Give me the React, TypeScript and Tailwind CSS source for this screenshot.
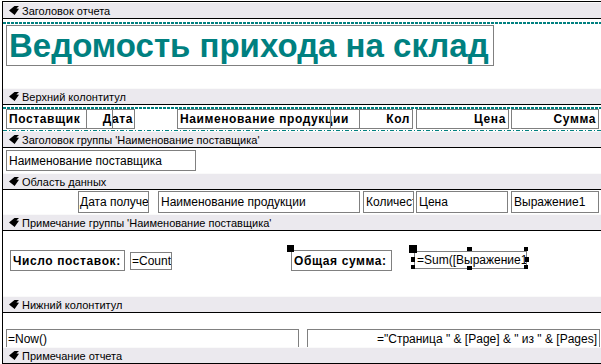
import React from "react";

const Icon = () => (
  <svg width="10" height="9" viewBox="0 0 10 9" className="shrink-0">
    <path d="M0 4.6 L5.5 0 L10 0 L7.4 2.4 L10 2.8 L5.6 9 Z" fill="#000" />
  </svg>
);

const Bar = ({ label }: { label: string }) => (
  <div className="h-[17px] shrink-0 bg-[#ebe9ee] border-t border-t-[#fafafa] border-b border-b-black flex items-center pl-[6px] gap-[3px]">
    <Icon />
    <span className="text-[11px] leading-none text-black whitespace-nowrap pt-[1px]">{label}</span>
  </div>
);

const box = "absolute border border-[#808080] bg-white overflow-hidden whitespace-nowrap flex items-center";
const bold = "font-bold text-[12px] tracking-[0.6px] text-black";
const norm = "text-[12px] text-black";

export default function App() {
  return (
    <div className="w-[601px] h-[364px] bg-white overflow-hidden pt-[1px] pl-[2px] font-['Liberation_Sans',Arial,sans-serif]">
      <div className="h-[363px] border-l border-t border-black flex flex-col">
        <Bar label="Заголовок отчета" />
        {/* Report header */}
        <div className="relative h-[69px] shrink-0 overflow-hidden">
          <div className="absolute left-0 right-0 top-[3px] h-[2px] bg-[repeating-linear-gradient(90deg,#008080_0_3px,transparent_3px_4px)]" />
          <div className={`${box} left-[3px] top-[6px] w-[488px] h-[41px] pl-[2px]`}>
            <span className="font-bold text-[33px] leading-none text-[#008080]">Ведомость прихода на склад</span>
          </div>
        </div>
        <Bar label="Верхний колонтитул" />
        {/* Page header */}
        <div className="relative h-[26px] shrink-0 overflow-hidden">
          <div className="absolute left-0 right-0 top-[2px] h-[2px] bg-[repeating-linear-gradient(90deg,#008080_0_3px,transparent_3px_4px)]" />
          <div className={`${box} left-[3px] top-[4px] w-[81px] h-[20px] pl-[2px] ${bold}`}>Поставщик</div>
          <div className={`${box} left-[83px] top-[4px] w-[49px] h-[20px] justify-end pr-[1px] ${bold}`}>Дата</div>
          <div className="absolute left-[109px] top-[4px] w-[1px] h-[20px] bg-[#808080]" />
          <div className={`${box} left-[174px] top-[4px] w-[183px] h-[20px] pl-[2px] ${bold}`}>Наименование продукции</div>
          <div className="absolute left-[327px] top-[4px] w-[1px] h-[20px] bg-[#808080]" />
          <div className={`${box} left-[356px] top-[4px] w-[54px] h-[20px] justify-end pr-[2px] ${bold}`}>Кол</div>
          <div className={`${box} left-[413px] top-[4px] w-[93px] h-[20px] justify-end pr-[2px] ${bold}`}>Цена</div>
          <div className={`${box} left-[508px] top-[4px] w-[88px] h-[20px] justify-end pr-[2px] ${bold}`}>Сумма</div>
          <div className="absolute left-0 right-0 top-[25px] h-[1px] bg-[repeating-linear-gradient(90deg,#008080_0_4px,transparent_4px_6px,#008080_6px_7px,transparent_7px_9px)]" />
        </div>
        <Bar label="Заголовок группы 'Наименование поставщика'" />
        {/* Group header */}
        <div className="relative h-[25px] shrink-0 overflow-hidden">
          <div className={`${box} left-[3px] top-[2px] w-[190px] h-[21px] pl-[2px] ${norm}`}>Наименование поставщика</div>
        </div>
        <Bar label="Область данных" />
        {/* Detail */}
        <div className="relative h-[24px] shrink-0 overflow-hidden">
          <div className={`${box} left-[75px] top-[1px] w-[71px] h-[22px] pl-[1px] ${norm}`}>Дата получения</div>
          <div className={`${box} left-[155px] top-[1px] w-[202px] h-[22px] pl-[2px] ${norm}`}>Наименование продукции</div>
          <div className={`${box} left-[360px] top-[1px] w-[51px] h-[22px] pl-[2px] ${norm}`}>Количество</div>
          <div className={`${box} left-[413px] top-[1px] w-[92px] h-[22px] pl-[2px] ${norm}`}>Цена</div>
          <div className={`${box} left-[508px] top-[1px] w-[88px] h-[22px] pl-[2px] ${norm}`}>Выражение1</div>
        </div>
        <Bar label="Примечание группы 'Наименование поставщика'" />
        {/* Group footer */}
        <div className="relative h-[65px] shrink-0 overflow-hidden">
          <div className={`${box} left-[7px] top-[19px] w-[115px] h-[21px] pl-[2px] ${bold}`}>Число поставок:</div>
          <div className={`${box} left-[127px] top-[21px] w-[42px] h-[18px] pl-[1px] ${norm}`}>=Count([Поставщик])</div>
          <div className={`${box} left-[288px] top-[19px] w-[101px] h-[21px] pl-[2px] ${bold}`}>Общая сумма:</div>
          <div className="absolute left-[284px] top-[14px] w-[7px] h-[7px] bg-black" />
          <div className={`${box} left-[411px] top-[20px] w-[113px] h-[18px] pl-[2px] ${norm}`}>=Sum([Выражение1])</div>
          <div className="absolute left-[406px] top-[14px] w-[8px] h-[8px] bg-black" />
          <div className="absolute left-[464px] top-[16px] w-[5px] h-[4px] bg-black" />
          <div className="absolute left-[521px] top-[16px] w-[4px] h-[4px] bg-black" />
          <div className="absolute left-[408px] top-[26px] w-[4px] h-[5px] bg-black" />
          <div className="absolute left-[522px] top-[26px] w-[4px] h-[5px] bg-black" />
          <div className="absolute left-[408px] top-[34px] w-[4px] h-[4px] bg-black" />
          <div className="absolute left-[464px] top-[35px] w-[5px] h-[4px] bg-black" />
          <div className="absolute left-[521px] top-[34px] w-[4px] h-[4px] bg-black" />
        </div>
        <Bar label="Нижний колонтитул" />
        {/* Page footer */}
        <div className="relative h-[34px] shrink-0 overflow-hidden">
          <div className={`${box} left-[3px] top-[16px] w-[293px] h-[20px] pl-[1px] ${norm}`}>=Now()</div>
          <div className={`${box} left-[304px] top-[16px] w-[293px] h-[20px] justify-end pr-[2px] ${norm}`}>="Страница " &amp; [Page] &amp; " из " &amp; [Pages]</div>
        </div>
        <Bar label="Примечание отчета" />
      </div>
    </div>
  );
}
